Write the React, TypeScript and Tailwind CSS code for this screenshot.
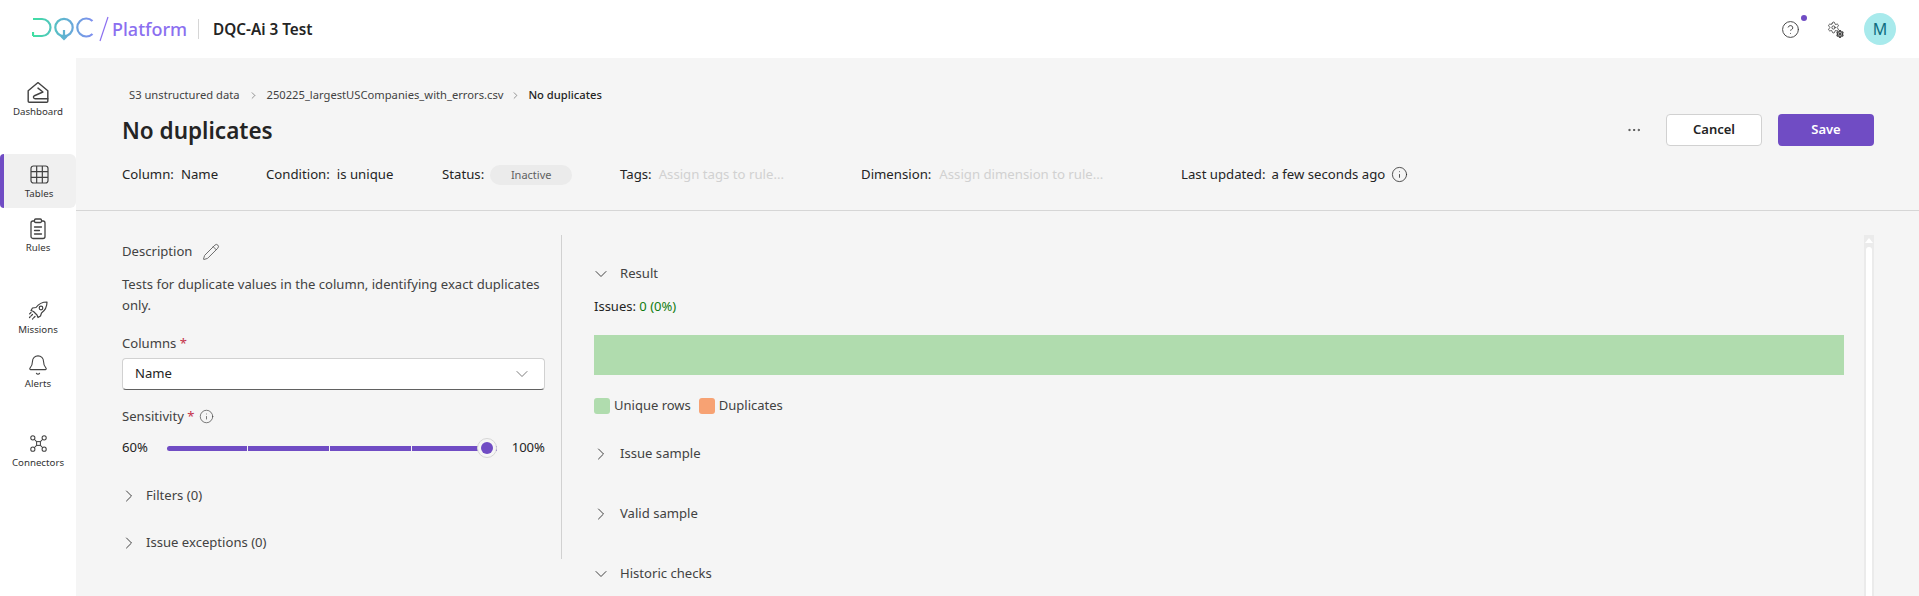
import { Bell, ChevronDown, ChevronRight, CircleHelp, Ellipsis, Info, Pencil, Settings } from "lucide-react";
import type { ReactNode } from "react";

function DashboardIcon() {
  return (
    <svg width="24" height="24" viewBox="0 0 22 22" fill="none" stroke="#424242" strokeWidth="1.3" strokeLinejoin="round" strokeLinecap="round">
      <path d="M2 9 10.500 1.800a1 1 0 0 1 1 0L20 9v9.500a1 1 0 0 1-1 1H3a1 1 0 0 1-1-1z" />
      <path d="M11 6.500l4.500 3.600-7.800 3.400c-1.600.9-.8 2.800.8 2.800H20" />
    </svg>
  );
}

function TablesIcon() {
  return (
    <svg width="19" height="19" viewBox="0 0 19 19" fill="none" stroke="#424242" strokeWidth="1.2">
      <rect x="1" y="1" width="17" height="17" rx="2.500" />
      <path d="M6.670 1v17M12.330 1v17M1 6.670h17M1 12.330h17" />
    </svg>
  );
}

function RulesIcon() {
  return (
    <svg width="18" height="22" viewBox="0 0 18 22" fill="none" stroke="#424242" strokeWidth="1.3" strokeLinecap="round">
      <rect x="2" y="3" width="14" height="17.500" rx="2" />
      <rect x="5.500" y="1" width="7" height="3.500" rx="1.200" fill="#fff" />
      <path d="M5.500 9h7M5.500 12.500h5M5.500 16h7" />
    </svg>
  );
}

function MissionsIcon() {
  return (
    <svg width="22" height="22" viewBox="0 0 22 22" fill="none" stroke="#424242" strokeWidth="1.2" strokeLinecap="round" strokeLinejoin="round">
      <path d="M9 7.500c2.500-3.500 6.500-5.500 11-5.500 0 4.500-2 8.500-5.500 11l-1 3-2.500 1.500-1-2.500-3.500-3.500-2.500-1L5.500 8z" />
      <circle cx="14" cy="8" r="1.800" />
      <path d="M5.500 14.500 2.500 17.500M8 16.500l-2.500 2.500M4 12.500 2 14.500" strokeDasharray="2 1.200" />
    </svg>
  );
}

function ConnectorsIcon() {
  return (
    <svg width="17" height="17" viewBox="0 0 18 18" fill="none" stroke="#424242" strokeWidth="1.1">
      <rect x="7" y="7" width="4" height="4" />
      <circle cx="3" cy="3" r="2.200" />
      <circle cx="15" cy="3" r="2.200" />
      <circle cx="3" cy="15" r="2.200" />
      <circle cx="15" cy="15" r="2.200" />
      <path d="M4.500 4.500 7 7M13.500 4.500 11 7M4.500 13.500 7 11M13.500 13.500 11 11" />
    </svg>
  );
}

function Logo() {
  return (
    <svg width="62" height="26" viewBox="0 0 62 26" fill="none" strokeWidth="2.2">
      <defs>
        <linearGradient id="dqc" x1="0" x2="62" y1="0" y2="0" gradientUnits="userSpaceOnUse">
          <stop offset="0" stopColor="#3ee0a0" />
          <stop offset="0.5" stopColor="#5fb4d0" />
          <stop offset="1" stopColor="#7f8df0" />
        </linearGradient>
      </defs>
      <path d="M1 3h9a8.500 8.500 0 0 1 0 17H1M1 20v-4" stroke="url(#dqc)" />
      <circle cx="32" cy="11.500" r="8.700" stroke="url(#dqc)" />
      <path d="M32 14v9m-2.500-2.500L32 23l2.500-2.500" stroke="url(#dqc)" />
      <path d="M60.500 5a9 9 0 1 0 0 13" stroke="url(#dqc)" />
    </svg>
  );
}

function NavItem({ icon, label, active }: { icon: ReactNode; label: string; active?: boolean }) {
  return (
    <div className={active ? "relative h-[54px] flex flex-col items-center justify-center rounded-md bg-[#f0f0f0] pl-[2px]" : "h-[54px] flex flex-col items-center justify-center"}>
      {active && <div className="absolute left-0 top-0 bottom-0 w-[4px] rounded-l-sm bg-[#704cc4]" />}
      <div className="h-[24px] flex items-center justify-center">{icon}</div>
      <span className="text-[9.7px] leading-[13px] text-[#333]">{label}</span>
    </div>
  );
}

function Section({ label, open, className }: { label: string; open?: boolean; className?: string }) {
  return (
    <div className={"flex items-center -ml-[3px] text-[13.100px] text-[#424242] " + (className ?? "")}>
      {open ? <ChevronDown size={20} strokeWidth={1.2} /> : <ChevronRight size={20} strokeWidth={1.2} />}
      <span>{label}</span>
    </div>
  );
}

export default function App() {
  return (
    <div className="h-[596px] overflow-hidden bg-white flex flex-col font-['Noto_Sans',sans-serif] text-[#242424]">
      {/* Header */}
      <header className="h-[58px] shrink-0 flex items-center pl-[32px] pr-[23px]">
        <Logo />
        <svg width="12" height="26" viewBox="0 0 12 26" className="ml-[4px]" stroke="#8b6ff0" strokeWidth="1.2"><path d="M10 1 2 25" /></svg>
        <span className="ml-[2px] text-[18px] font-medium text-[#8b6ff0] w-[86px]">Platform</span>
        <div className="h-[20px] w-px bg-[#d6d6d6]" />
        <span className="ml-[14px] text-[15.300px] font-semibold">DQC-Ai 3 Test</span>
        <div className="ml-auto flex items-center">
          <div className="relative">
            <CircleHelp size={19} strokeWidth={1.200} className="text-[#424242]" />
            <div className="absolute -top-[5px] -right-[7px] w-[6px] h-[6px] rounded-full bg-[#704cc4]" />
          </div>
          <div className="relative ml-[27px] w-[17px] h-[17px] text-[#333]">
            <Settings size={13} strokeWidth={1.500} />
            <Settings size={8} strokeWidth={3.500} className="absolute right-0 bottom-0" />
          </div>
          <div className="ml-[20px] w-[32px] h-[32px] rounded-full bg-[#a8eaec] flex items-center justify-center text-[16px] text-[#0f6d80]">M</div>
        </div>
      </header>

      <div className="flex-1 flex min-h-0">
        {/* Sidebar */}
        <aside className="w-[76px] shrink-0 pt-[14px] flex flex-col">
          <NavItem icon={<DashboardIcon />} label="Dashboard" />
          <div className="mt-[28px]"><NavItem active icon={<TablesIcon />} label="Tables" /></div>
          <NavItem icon={<RulesIcon />} label="Rules" />
          <div className="mt-[28px]"><NavItem icon={<MissionsIcon />} label="Missions" /></div>
          <NavItem icon={<Bell size={22} strokeWidth={1.200} className="text-[#424242]" />} label="Alerts" />
          <div className="mt-[25px]"><NavItem icon={<ConnectorsIcon />} label="Connectors" /></div>
        </aside>

        {/* Main */}
        <main className="flex-1 min-w-0 bg-[#f5f5f5] flex flex-col">
          <div className="h-[153px] shrink-0 border-b border-[#d6d6d6] pl-[46px] pr-[45px] pt-[29px]">
            <div className="pl-[7px] flex items-center text-[11.200px] leading-[16px] text-[#424242]">
              <span>S3 unstructured data</span>
              <ChevronRight size={11} strokeWidth={1.2} className="mx-[8px]" />
              <span>250225_largestUSCompanies_with_errors.csv</span>
              <ChevronRight size={11} strokeWidth={1.2} className="mx-[7px]" />
              <span className="text-[#242424] font-medium">No duplicates</span>
            </div>
            <div className="mt-[7px] flex items-center h-[40px]">
              <h1 className="text-[22.500px] font-semibold pt-[2px]">No duplicates</h1>
              <Ellipsis size={16} strokeWidth={1.4} className="ml-auto mr-[24px] text-[#424242]" />
              <button className="w-[96px] h-[32px] rounded-[4px] border border-[#d1d1d1] bg-white text-[13px] font-semibold">Cancel</button>
              <button className="ml-[16px] w-[96px] h-[32px] rounded-[4px] bg-[#704cc4] text-white text-[13px] font-semibold">Save</button>
            </div>
            <div className="mt-[15px] flex items-center text-[13.200px]">
              <div className="w-[144px] flex gap-[7px]"><span>Column:</span><span>Name</span></div>
              <div className="w-[176px] flex gap-[7px]"><span>Condition:</span><span>is unique</span></div>
              <div className="w-[178px] flex items-center gap-[6px]">
                <span>Status:</span>
                <span className="w-[82px] h-[20px] rounded-full bg-[#ebebeb] flex items-center justify-center text-[11px] text-[#616161]">Inactive</span>
              </div>
              <div className="w-[241px] flex gap-[7px]"><span>Tags:</span><span className="text-[#d1d1d1]">Assign tags to rule...</span></div>
              <div className="w-[320px] flex gap-[8px]"><span>Dimension:</span><span className="text-[#d1d1d1]">Assign dimension to rule...</span></div>
              <div className="flex items-center gap-[6px]"><span>Last updated:</span><span>a few seconds ago</span><Info size={17} strokeWidth={1.1} /></div>
            </div>
          </div>

          <div className="flex-1 min-h-0 flex pl-[46px] pt-[24px] pr-[45px]">
            {/* Left column */}
            <div className="w-[440px] h-[324px] shrink-0 border-r border-[#d1d1d1] pr-[16px] text-[13.100px]">
              <div className="flex items-center gap-[10px] text-[#424242] h-[20px] mt-[7px]"><span>Description</span><Pencil size={18} strokeWidth={1} /></div>
              <p className="mt-[12px] leading-[21px] text-[#424242]">Tests for duplicate values in the column, identifying exact duplicates only.</p>
              <div className="mt-[17px] leading-[20px] text-[#424242]">Columns <span className="text-[#c4314b]">*</span></div>
              <div className="mt-[5px] h-[32px] rounded-[4px] border border-[#d1d1d1] border-b-[#616161] bg-white flex items-center justify-between pl-[12px] pr-[12px]">
                <span>Name</span>
                <ChevronDown size={20} strokeWidth={1} className="text-[#616161]" />
              </div>
              <div className="mt-[16px] flex items-center gap-[5px] leading-[20px] text-[#424242]"><span>Sensitivity <span className="text-[#c4314b]">*</span></span><Info size={15} strokeWidth={1.1} /></div>
              <div className="mt-[12px] h-[20px] flex items-center">
                <span className="w-[45px]">60%</span>
                <div className="relative w-[330px] flex gap-px">
                  <div className="w-[80px] h-[5px] rounded-l-full bg-[#704cc4]" />
                  <div className="w-[81px] h-[5px] bg-[#704cc4]" />
                  <div className="w-[81px] h-[5px] bg-[#704cc4]" />
                  <div className="flex-1 h-[5px] bg-[#704cc4]" />
                  <div className="absolute right-0 top-1/2 -translate-y-1/2 w-[20px] h-[20px] rounded-full bg-[#f5f5f5] border border-[#d6d6d6] flex items-center justify-center">
                    <div className="w-[12px] h-[12px] rounded-full bg-[#704cc4]" />
                  </div>
                </div>
                <span className="ml-auto">100%</span>
              </div>
              <Section className="mt-[28px] gap-[7px]" label="Filters (0)" />
              <Section className="mt-[27px] gap-[7px]" label="Issue exceptions (0)" />
            </div>

            {/* Right column */}
            <div className="flex-1 min-w-0 pl-[32px] pt-[29px]">
              <Section open label="Result" className="h-[20px] gap-[9px]" />
              <div className="mt-[12px] text-[13px] leading-[20px]">Issues: <span className="text-[#107c10]">0 (0%)</span></div>
              <div className="mt-[19px] mr-[1px] h-[40px] bg-[#b0dcae]" />
              <div className="mt-[21px] flex items-center text-[13px] text-[#424242]">
                <div className="w-[16px] h-[16px] rounded-[3px] bg-[#b0dcae]" />
                <span className="ml-[4px]">Unique rows</span>
                <div className="ml-[8px] w-[16px] h-[16px] rounded-[3px] bg-[#f7a273]" />
                <span className="ml-[4px]">Duplicates</span>
              </div>
              <Section label="Issue sample" className="mt-[28px] h-[20px] gap-[9px]" />
              <Section label="Valid sample" className="mt-[40px] h-[20px] gap-[9px]" />
              <Section open label="Historic checks" className="mt-[40px] h-[20px] gap-[9px]" />
            </div>

            {/* Scrollbar */}
            <div className="ml-[19px] w-[10px] shrink-0 bg-[#ebebeb] flex flex-col items-center pt-[3px]">
              <div className="w-0 h-0 border-x-[4px] border-x-transparent border-b-[5px] border-b-white" />
              <div className="mt-[4px] w-[6px] flex-1 rounded-t-full bg-white" />
            </div>
          </div>
        </main>
      </div>
    </div>
  );
}
